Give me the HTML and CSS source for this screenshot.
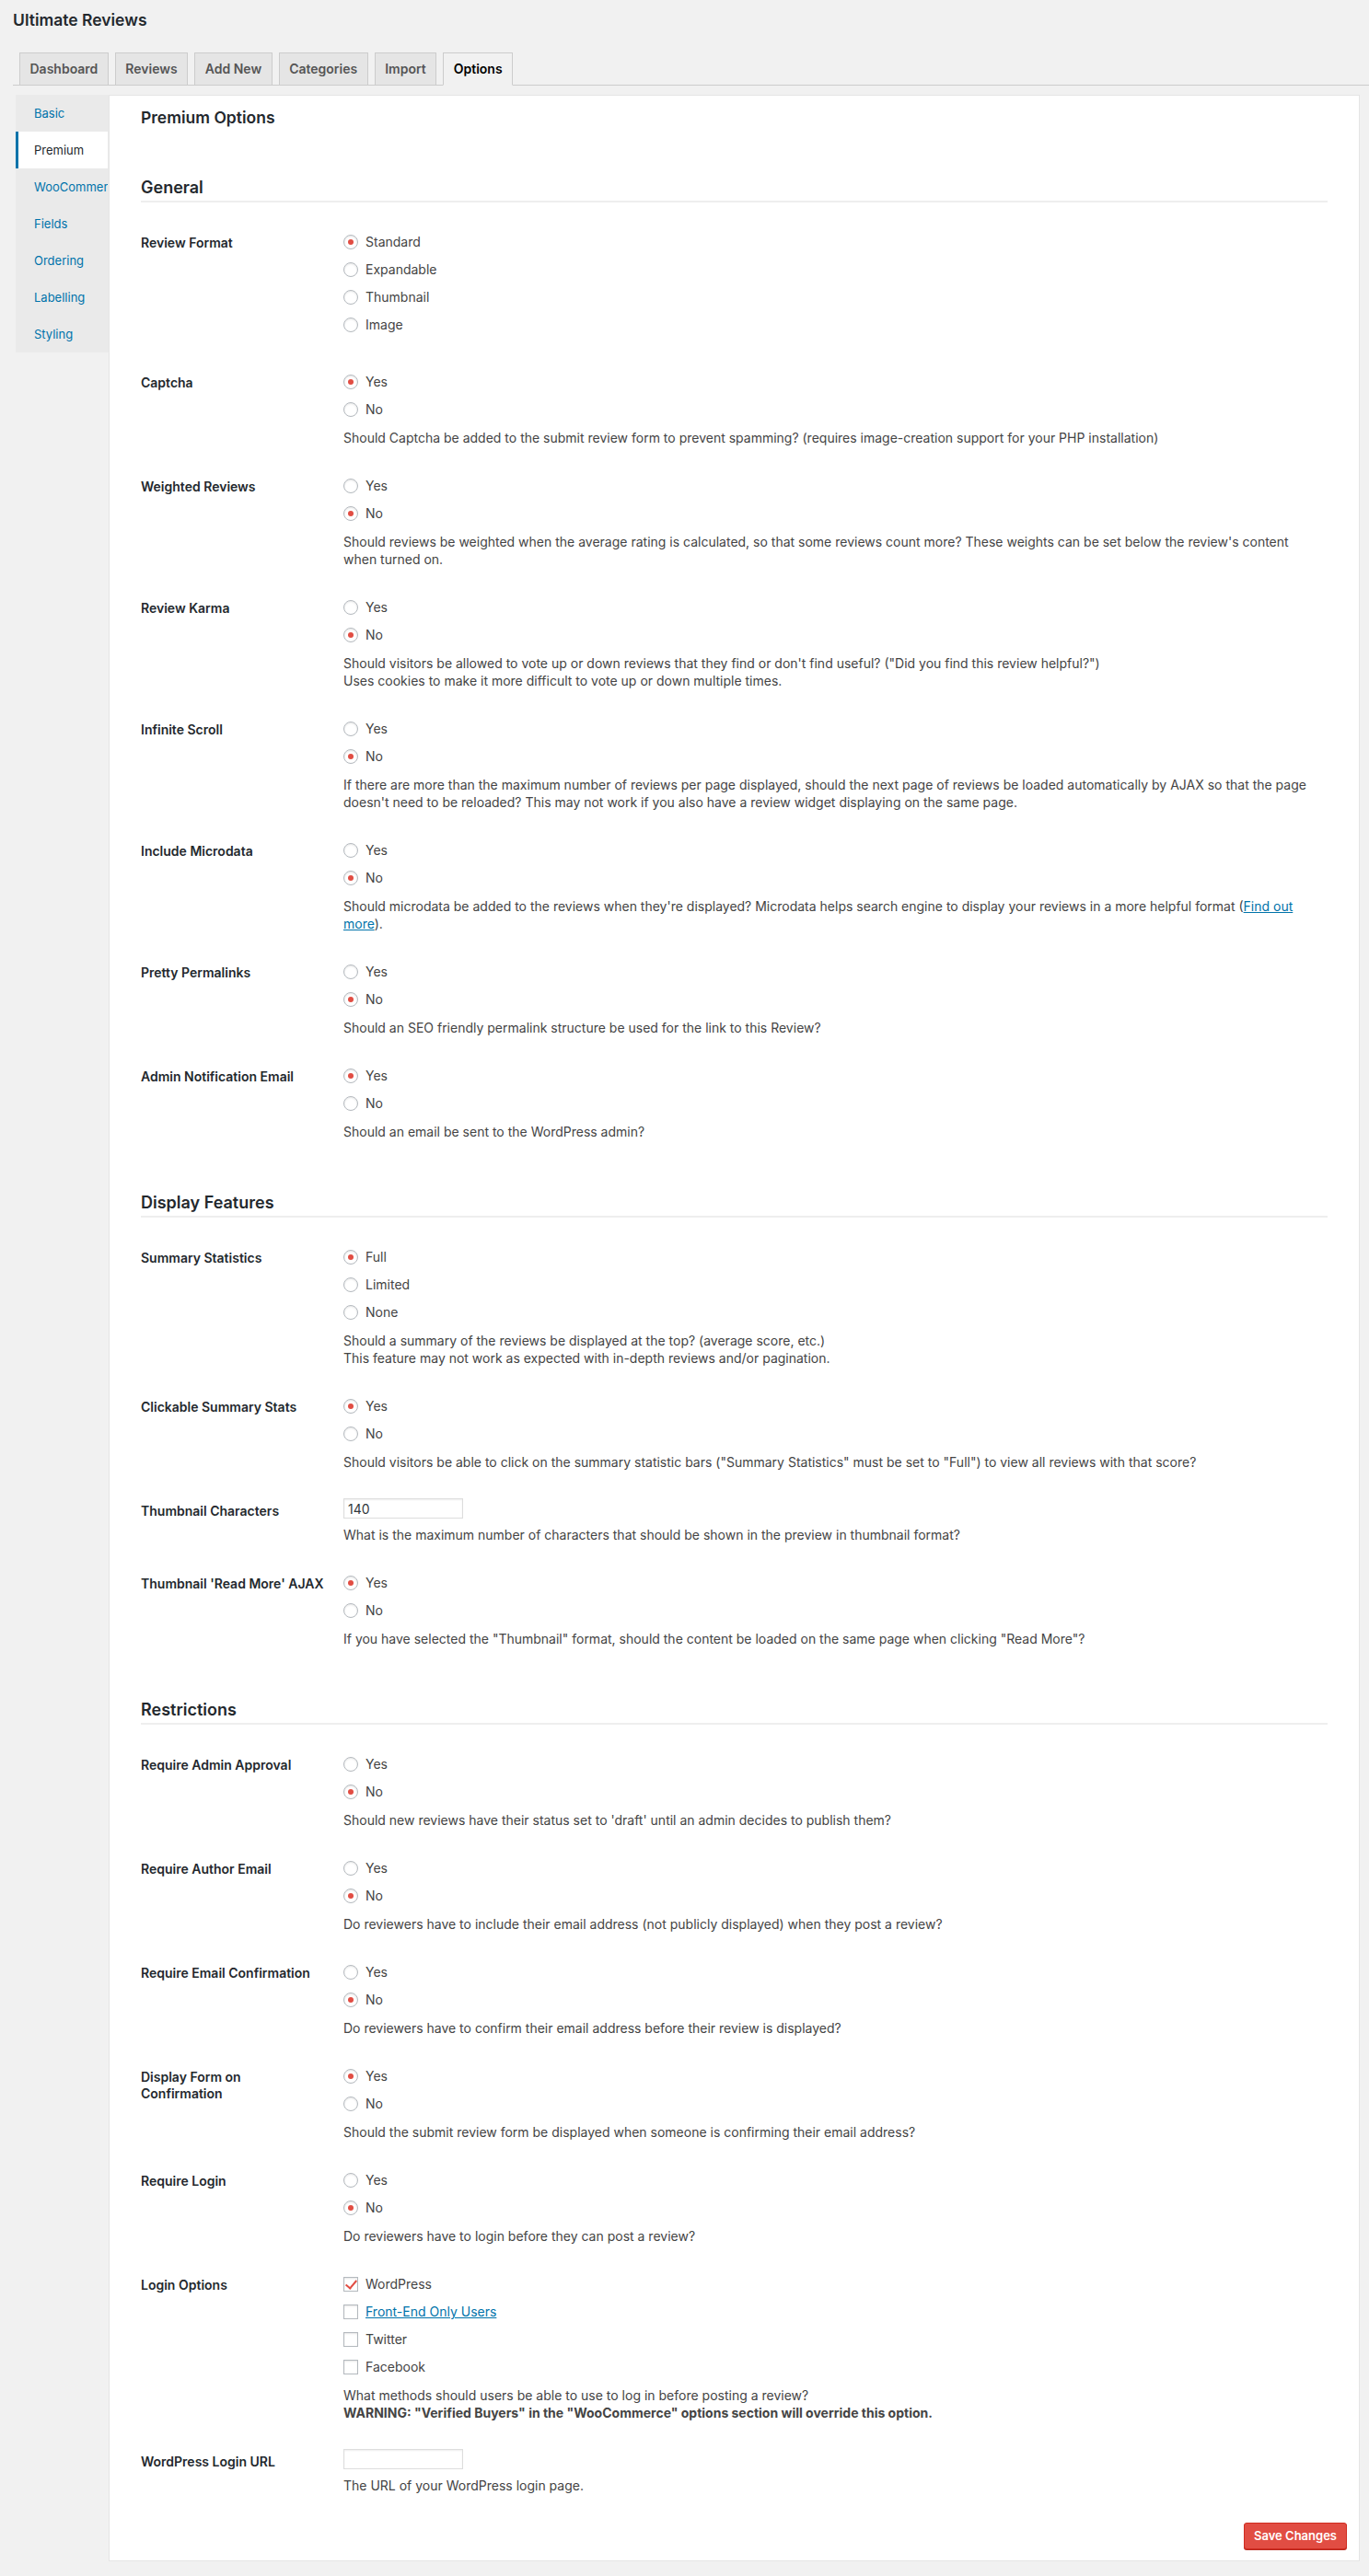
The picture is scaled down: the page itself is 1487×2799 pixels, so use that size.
FILE: index.html
```html
<!DOCTYPE html>
<html lang="en">
<head>
<meta charset="utf-8">
<title>Ultimate Reviews - Options</title>
<link rel="stylesheet" href="styles.css">
</head>
<body>
<div class="wrap">
  <h1 class="page-title">Ultimate Reviews</h1>
  <nav class="tabs">
    <a class="tab" href="#">Dashboard</a>
    <a class="tab" href="#">Reviews</a>
    <a class="tab" href="#">Add New</a>
    <a class="tab" href="#">Categories</a>
    <a class="tab" href="#">Import</a>
    <a class="tab tab-active" href="#">Options</a>
  </nav>

  <div class="main">
    <ul class="sidenav">
      <li><a href="#">Basic</a></li>
      <li class="active"><a href="#">Premium</a></li>
      <li><a href="#">WooCommerce</a></li>
      <li><a href="#">Fields</a></li>
      <li><a href="#">Ordering</a></li>
      <li><a href="#">Labelling</a></li>
      <li><a href="#">Styling</a></li>
    </ul>

    <form class="panel">
      <h2 class="panel-title">Premium Options</h2>

      <h3 class="section-title first">General</h3>
      <div class="rows">
        <div class="row">
          <div class="label">Review Format</div>
          <div class="field">
            <fieldset class="opts nodesc">
              <label class="opt"><input type="radio" name="format" checked><span>Standard</span></label>
              <label class="opt"><input type="radio" name="format"><span>Expandable</span></label>
              <label class="opt"><input type="radio" name="format"><span>Thumbnail</span></label>
              <label class="opt"><input type="radio" name="format"><span>Image</span></label>
            </fieldset>
          </div>
        </div>

        <div class="row">
          <div class="label">Captcha</div>
          <div class="field">
            <fieldset class="opts">
              <label class="opt"><input type="radio" name="captcha" checked><span>Yes</span></label>
              <label class="opt"><input type="radio" name="captcha"><span>No</span></label>
            </fieldset>
            <p class="desc">Should Captcha be added to the submit review form to prevent spamming? (requires image-creation support for your PHP installation)</p>
          </div>
        </div>

        <div class="row">
          <div class="label">Weighted Reviews</div>
          <div class="field">
            <fieldset class="opts">
              <label class="opt"><input type="radio" name="weighted"><span>Yes</span></label>
              <label class="opt"><input type="radio" name="weighted" checked><span>No</span></label>
            </fieldset>
            <p class="desc">Should reviews be weighted when the average rating is calculated, so that some reviews count more? These weights can be set below the review's content<br>when turned on.</p>
          </div>
        </div>

        <div class="row">
          <div class="label">Review Karma</div>
          <div class="field">
            <fieldset class="opts">
              <label class="opt"><input type="radio" name="karma"><span>Yes</span></label>
              <label class="opt"><input type="radio" name="karma" checked><span>No</span></label>
            </fieldset>
            <p class="desc">Should visitors be allowed to vote up or down reviews that they find or don't find useful? ("Did you find this review helpful?")<br>Uses cookies to make it more difficult to vote up or down multiple times.</p>
          </div>
        </div>

        <div class="row">
          <div class="label">Infinite Scroll</div>
          <div class="field">
            <fieldset class="opts">
              <label class="opt"><input type="radio" name="infinite"><span>Yes</span></label>
              <label class="opt"><input type="radio" name="infinite" checked><span>No</span></label>
            </fieldset>
            <p class="desc">If there are more than the maximum number of reviews per page displayed, should the next page of reviews be loaded automatically by AJAX so that the page<br>doesn't need to be reloaded? This may not work if you also have a review widget displaying on the same page.</p>
          </div>
        </div>

        <div class="row">
          <div class="label">Include Microdata</div>
          <div class="field">
            <fieldset class="opts">
              <label class="opt"><input type="radio" name="microdata"><span>Yes</span></label>
              <label class="opt"><input type="radio" name="microdata" checked><span>No</span></label>
            </fieldset>
            <p class="desc">Should microdata be added to the reviews when they're displayed? Microdata helps search engine to display your reviews in a more helpful format (<a href="#">Find out<br>more</a>).</p>
          </div>
        </div>

        <div class="row">
          <div class="label">Pretty Permalinks</div>
          <div class="field">
            <fieldset class="opts">
              <label class="opt"><input type="radio" name="permalinks"><span>Yes</span></label>
              <label class="opt"><input type="radio" name="permalinks" checked><span>No</span></label>
            </fieldset>
            <p class="desc">Should an SEO friendly permalink structure be used for the link to this Review?</p>
          </div>
        </div>

        <div class="row">
          <div class="label">Admin Notification Email</div>
          <div class="field">
            <fieldset class="opts">
              <label class="opt"><input type="radio" name="adminmail" checked><span>Yes</span></label>
              <label class="opt"><input type="radio" name="adminmail"><span>No</span></label>
            </fieldset>
            <p class="desc">Should an email be sent to the WordPress admin?</p>
          </div>
        </div>
      </div>

      <h3 class="section-title">Display Features</h3>
      <div class="rows">
        <div class="row">
          <div class="label">Summary Statistics</div>
          <div class="field">
            <fieldset class="opts">
              <label class="opt"><input type="radio" name="summary" checked><span>Full</span></label>
              <label class="opt"><input type="radio" name="summary"><span>Limited</span></label>
              <label class="opt"><input type="radio" name="summary"><span>None</span></label>
            </fieldset>
            <p class="desc">Should a summary of the reviews be displayed at the top? (average score, etc.)<br>This feature may not work as expected with in-depth reviews and/or pagination.</p>
          </div>
        </div>

        <div class="row">
          <div class="label">Clickable Summary Stats</div>
          <div class="field">
            <fieldset class="opts">
              <label class="opt"><input type="radio" name="clickable" checked><span>Yes</span></label>
              <label class="opt"><input type="radio" name="clickable"><span>No</span></label>
            </fieldset>
            <p class="desc">Should visitors be able to click on the summary statistic bars ("Summary Statistics" must be set to "Full") to view all reviews with that score?</p>
          </div>
        </div>

        <div class="row">
          <div class="label">Thumbnail Characters</div>
          <div class="field">
            <input class="text-input" type="text" value="140">
            <p class="desc after-input">What is the maximum number of characters that should be shown in the preview in thumbnail format?</p>
          </div>
        </div>

        <div class="row">
          <div class="label">Thumbnail 'Read More' AJAX</div>
          <div class="field">
            <fieldset class="opts">
              <label class="opt"><input type="radio" name="readmore" checked><span>Yes</span></label>
              <label class="opt"><input type="radio" name="readmore"><span>No</span></label>
            </fieldset>
            <p class="desc">If you have selected the "Thumbnail" format, should the content be loaded on the same page when clicking "Read More"?</p>
          </div>
        </div>
      </div>

      <h3 class="section-title">Restrictions</h3>
      <div class="rows">
        <div class="row">
          <div class="label">Require Admin Approval</div>
          <div class="field">
            <fieldset class="opts">
              <label class="opt"><input type="radio" name="approval"><span>Yes</span></label>
              <label class="opt"><input type="radio" name="approval" checked><span>No</span></label>
            </fieldset>
            <p class="desc">Should new reviews have their status set to 'draft' until an admin decides to publish them?</p>
          </div>
        </div>

        <div class="row">
          <div class="label">Require Author Email</div>
          <div class="field">
            <fieldset class="opts">
              <label class="opt"><input type="radio" name="authormail"><span>Yes</span></label>
              <label class="opt"><input type="radio" name="authormail" checked><span>No</span></label>
            </fieldset>
            <p class="desc">Do reviewers have to include their email address (not publicly displayed) when they post a review?</p>
          </div>
        </div>

        <div class="row">
          <div class="label">Require Email Confirmation</div>
          <div class="field">
            <fieldset class="opts">
              <label class="opt"><input type="radio" name="confirm"><span>Yes</span></label>
              <label class="opt"><input type="radio" name="confirm" checked><span>No</span></label>
            </fieldset>
            <p class="desc">Do reviewers have to confirm their email address before their review is displayed?</p>
          </div>
        </div>

        <div class="row">
          <div class="label">Display Form on<br>Confirmation</div>
          <div class="field">
            <fieldset class="opts">
              <label class="opt"><input type="radio" name="formconfirm" checked><span>Yes</span></label>
              <label class="opt"><input type="radio" name="formconfirm"><span>No</span></label>
            </fieldset>
            <p class="desc">Should the submit review form be displayed when someone is confirming their email address?</p>
          </div>
        </div>

        <div class="row">
          <div class="label">Require Login</div>
          <div class="field">
            <fieldset class="opts">
              <label class="opt"><input type="radio" name="login"><span>Yes</span></label>
              <label class="opt"><input type="radio" name="login" checked><span>No</span></label>
            </fieldset>
            <p class="desc">Do reviewers have to login before they can post a review?</p>
          </div>
        </div>

        <div class="row">
          <div class="label">Login Options</div>
          <div class="field">
            <fieldset class="opts">
              <label class="opt"><input type="checkbox" checked><span>WordPress</span></label>
              <label class="opt"><input type="checkbox"><a href="#">Front-End Only Users</a></label>
              <label class="opt"><input type="checkbox"><span>Twitter</span></label>
              <label class="opt"><input type="checkbox"><span>Facebook</span></label>
            </fieldset>
            <p class="desc">What methods should users be able to use to log in before posting a review?<br><strong>WARNING: "Verified Buyers" in the "WooCommerce" options section will override this option.</strong></p>
          </div>
        </div>

        <div class="row">
          <div class="label">WordPress Login URL</div>
          <div class="field">
            <input class="text-input" type="text" value="">
            <p class="desc after-input">The URL of your WordPress login page.</p>
          </div>
        </div>
      </div>

      <div class="actions">
        <button class="save-btn" type="button">Save Changes</button>
      </div>
    </form>
  </div>
</div>
</body>
</html>
```

FILE: styles.css
```css
* { box-sizing: border-box; }

html, body {
  margin: 0;
  padding: 0;
}

body {
  background: #f1f1f1;
  color: #444;
  font-family: Inter, "Noto Sans", "Liberation Sans", sans-serif;
  font-size: 14px;
}

a { color: #0073aa; }

.wrap {
  padding: 10px 0 17px 14px;
}

.page-title {
  margin: 0;
  font-size: 17.5px;
  line-height: 24px;
  font-weight: 600;
  color: #23282d;
}

/* Tabs */
.tabs {
  display: flex;
  gap: 7px;
  margin-top: 23px;
  padding-left: 7px;
  border-bottom: 1px solid #ccc;
}

.tab {
  display: block;
  padding: 5px 10.5px;
  line-height: 24px;
  font-size: 14px;
  font-weight: 600;
  color: #555;
  text-decoration: none;
  background: #e5e5e5;
  border: 1px solid #ccc;
  border-bottom: none;
}

.tab-active {
  background: #f1f1f1;
  color: #000;
  border-bottom: 1px solid #f1f1f1;
  margin-bottom: -1px;
}

/* Main */
.main {
  display: flex;
  align-items: flex-start;
  margin-top: 10px;
}

.sidenav {
  list-style: none;
  margin: 0 0 0 3px;
  padding: 0;
  width: 101px;
  flex: none;
  background: #eaeaea;
}

.sidenav li {
  width: 100px;
  height: 40px;
  overflow: hidden;
  white-space: nowrap;
}

.sidenav a {
  display: block;
  height: 40px;
  line-height: 40px;
  padding-left: 20px;
  font-size: 13px;
  text-decoration: none;
  color: #0073aa;
}

.sidenav li.active {
  background: #fff;
  border-left: 3px solid #0073aa;
}

.sidenav li.active a {
  padding-left: 17px;
  color: #23282d;
}

/* Panel */
.panel {
  flex: 1;
  margin: 0 10px 0 0;
  background: #fff;
  border: 1px solid #e5e5e5;
  padding: 12px 34px 12px 34px;
}

.panel-title {
  margin: 0;
  font-size: 17.5px;
  line-height: 24px;
  font-weight: 600;
  color: #23282d;
}

.section-title {
  margin: 41px 0 0;
  font-size: 18px;
  line-height: 24px;
  font-weight: 600;
  color: #23282d;
  padding-bottom: 2px;
  border-bottom: 2px solid #eee;
}

.section-title.first {
  margin-top: 52px;
}

.rows {
  padding-top: 15px;
}

.row {
  display: grid;
  grid-template-columns: 220px 1fr;
  padding: 15px 0;
}

.label {
  padding-top: 5px;
  padding-right: 10px;
  line-height: 18px;
  font-size: 14px;
  font-weight: 600;
  color: #23282d;
}

.field {
  min-width: 0;
}

.opts {
  margin: 0;
  padding: 0;
  border: 0;
}

.opts.nodesc {
  margin-bottom: 2px;
}

.opt {
  display: flex;
  align-items: center;
  gap: 8px;
  height: 30px;
  padding: 3px 0 7px;
  margin: 0;
  line-height: 20px;
  font-size: 14px;
  color: #444;
  white-space: nowrap;
}

.opt input {
  -webkit-appearance: none;
  appearance: none;
  margin: 0;
  width: 16px;
  height: 16px;
  flex: none;
  border: 1px solid #b4b9be;
  background: #fff;
  box-shadow: inset 0 1px 2px rgba(0, 0, 0, 0.1);
  position: relative;
}

.opt input[type="radio"] {
  border-radius: 50%;
}

.opt input[type="radio"]:checked::before {
  content: "";
  position: absolute;
  left: 4px;
  top: 4px;
  width: 6px;
  height: 6px;
  border-radius: 50%;
  background: #e14d43;
}

.opt input[type="checkbox"]:checked::before {
  content: "";
  position: absolute;
  left: 4px;
  top: 0px;
  width: 5px;
  height: 10px;
  border-right: 2.5px solid #e14d43;
  border-bottom: 2.5px solid #e14d43;
  transform: rotate(40deg);
}

.desc {
  margin: 4px 0 0;
  line-height: 19px;
  font-size: 14px;
  color: #444;
  white-space: nowrap;
}

.desc strong {
  font-weight: 700;
}

.desc.after-input {
  margin-top: 8px;
}

.text-input {
  display: block;
  width: 130px;
  height: 22px;
  margin: 0;
  padding: 0 4px;
  border: 1px solid #ddd;
  box-shadow: inset 0 1px 2px rgba(0, 0, 0, 0.07);
  font-family: inherit;
  font-size: 14px;
  color: #32373c;
  background: #fff;
}

.actions {
  display: flex;
  justify-content: flex-end;
  margin: 16px -21px 0 0;
}

.save-btn {
  height: 29px;
  padding: 0 10px;
  border: 1px solid #d02c21;
  border-radius: 3px;
  background: #e14d43;
  color: #fff;
  font-family: inherit;
  font-size: 13px;
  font-weight: 600;
  line-height: 27px;
  box-shadow: 0 1px 0 #ba281e;
  cursor: pointer;
}
```
